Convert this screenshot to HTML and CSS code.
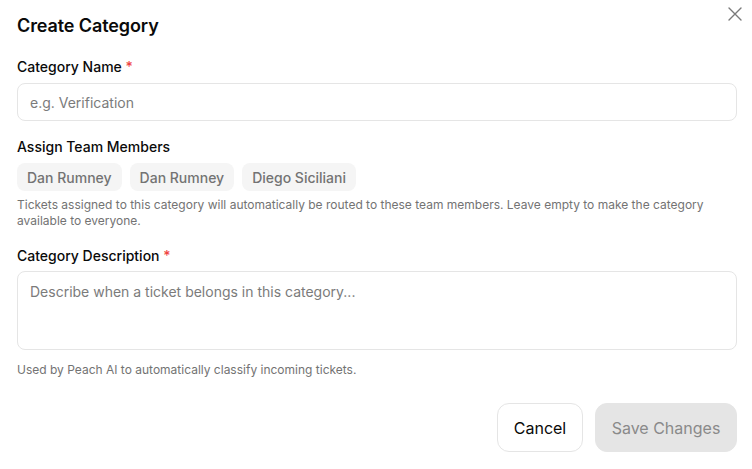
FILE: index.html
```html
<!DOCTYPE html>
<html lang="en">
<head>
<meta charset="utf-8">
<title>Create Category</title>
<link rel="stylesheet" href="styles.css">
</head>
<body>
<div class="dialog">
  <button class="close" aria-label="Close">
    <svg width="14" height="14" viewBox="0 0 14 14" fill="none" stroke="#7a7a7a" stroke-width="1.4" stroke-linecap="round"><path d="M1 1L13 13M13 1L1 13"/></svg>
  </button>
  <h1 class="title">Create Category</h1>

  <div class="field">
    <label class="label">Category Name <span class="req">*</span></label>
    <input class="input" type="text" placeholder="e.g. Verification">
  </div>

  <div class="field">
    <div class="label">Assign Team Members</div>
    <div class="chips">
      <span class="chip">Dan Rumney</span>
      <span class="chip">Dan Rumney</span>
      <span class="chip">Diego Siciliani</span>
    </div>
    <p class="hint hint-tight">Tickets assigned to this category will automatically be routed to these team members. Leave empty to make the category available to everyone.</p>
  </div>

  <div class="field field-desc">
    <label class="label">Category Description <span class="req">*</span></label>
    <textarea class="textarea" placeholder="Describe when a ticket belongs in this category..."></textarea>
    <p class="hint hint-loose">Used by Peach AI to automatically classify incoming tickets.</p>
  </div>

  <div class="actions">
    <button class="btn btn-outline">Cancel</button>
    <button class="btn btn-disabled">Save Changes</button>
  </div>
</div>
</body>
</html>
```
FILE: styles.css
```css
* { box-sizing: border-box; }
html, body { margin: 0; padding: 0; background: #fff; }
body {
  font-family: Inter, "Noto Sans", sans-serif;
  color: #0a0a0a;
  -webkit-font-smoothing: antialiased;
}
.dialog {
  position: relative;
  width: 752px;
  height: 469px;
  padding: 12px 15px 17px 17px;
  display: flex;
  flex-direction: column;
}
.close {
  position: absolute;
  top: 7px;
  right: 10px;
  width: 14px;
  height: 14px;
  padding: 0;
  border: 0;
  background: transparent;
  display: flex;
}
.title {
  margin: 0;
  font-size: 18px;
  line-height: 28px;
  font-weight: 600;
  letter-spacing: -0.1px;
}
.field {
  display: flex;
  flex-direction: column;
  margin-top: 16px;
}
.field:first-of-type { margin-top: 17px; }
.field-desc { margin-top: 17px; }
.label {
  font-size: 14px;
  line-height: 20px;
  font-weight: 500;
  margin-bottom: 6px;
}
.field-desc .label { margin-bottom: 5px; }
.req { color: #ef4444; }
.input, .textarea {
  width: 100%;
  font-family: inherit;
  font-size: 14px;
  line-height: 20px;
  color: #0a0a0a;
  border: 1px solid #e5e5e5;
  border-radius: 8px;
  padding: 8px 12px;
  outline: none;
  background: #fff;
}
.input { height: 38px; }
.textarea { height: 79px; resize: none; padding-top: 10px; }
.input::placeholder, .textarea::placeholder { color: #7b7b7b; }
.chips {
  display: flex;
  gap: 8px;
}
.chip {
  height: 28px;
  display: inline-flex;
  align-items: center;
  padding: 0 10px;
  background: #f5f5f5;
  border-radius: 8px;
  font-size: 14px;
  font-weight: 500;
  color: #737373;
}
.hint {
  margin: 0;
  font-size: 12px;
  line-height: 16px;
  color: #737373;
}
.hint-tight { margin-top: 6px; padding-right: 20px; }
.hint-loose { margin-top: 12px; }
.actions {
  margin-top: auto;
  display: flex;
  justify-content: flex-end;
  gap: 12px;
}
.btn {
  height: 49px;
  border-radius: 12px;
  font-family: inherit;
  font-size: 16px;
  padding: 0;
  white-space: nowrap;
}
.btn-outline {
  background: #fff;
  border: 1px solid #e5e5e5;
  color: #0a0a0a;
  width: 86px;
}
.btn-disabled {
  background: #e5e5e5;
  border: 1px solid #e5e5e5;
  color: #8a8a8a;
  width: 142px;
}
```
